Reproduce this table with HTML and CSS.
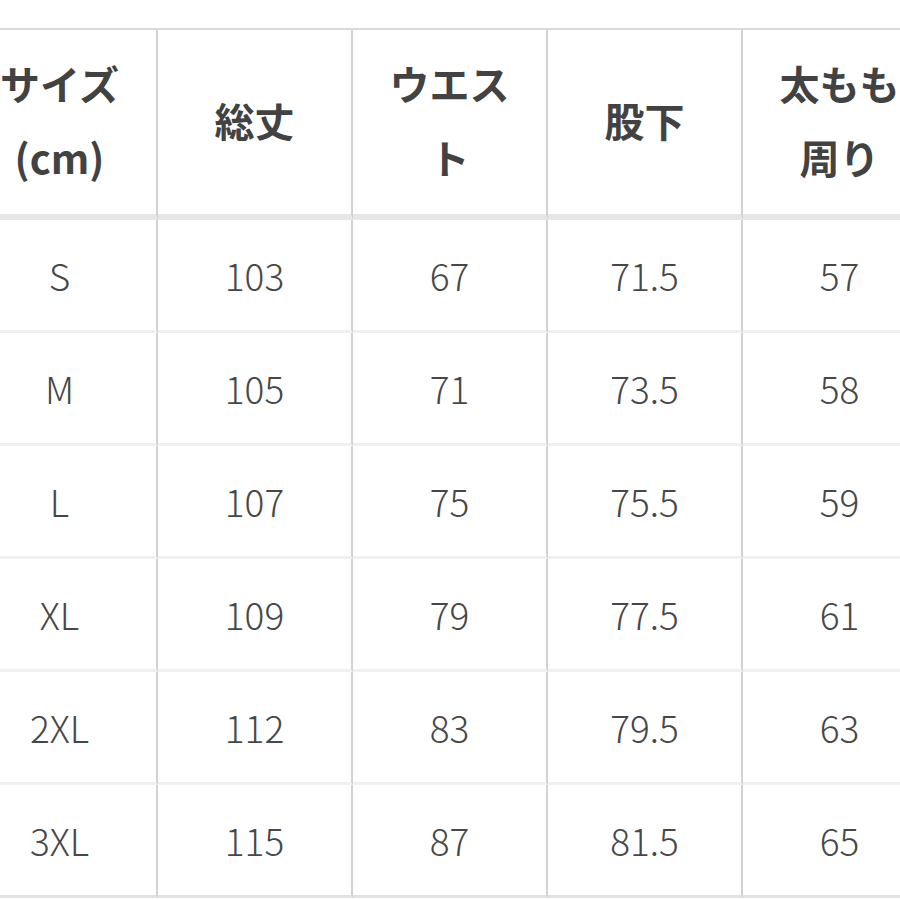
FILE: index.html
```html
<!DOCTYPE html>
<html lang="ja">
<head>
<meta charset="utf-8">
<link rel="stylesheet" href="styles.css">
</head>
<body>
<div class="frame">
  <div class="grid">
    <div class="cell head">サイズ<br>(cm)</div>
    <div class="cell head">総丈</div>
    <div class="cell head">ウエス<br>ト</div>
    <div class="cell head">股下</div>
    <div class="cell head">太もも<br>周り</div>

    <div class="cell">S</div><div class="cell">103</div><div class="cell">67</div><div class="cell">71.5</div><div class="cell">57</div>
    <div class="cell">M</div><div class="cell">105</div><div class="cell">71</div><div class="cell">73.5</div><div class="cell">58</div>
    <div class="cell">L</div><div class="cell">107</div><div class="cell">75</div><div class="cell">75.5</div><div class="cell">59</div>
    <div class="cell">XL</div><div class="cell">109</div><div class="cell">79</div><div class="cell">77.5</div><div class="cell">61</div>
    <div class="cell">2XL</div><div class="cell">112</div><div class="cell">83</div><div class="cell">79.5</div><div class="cell">63</div>
    <div class="cell last">3XL</div><div class="cell last">115</div><div class="cell last">87</div><div class="cell last">81.5</div><div class="cell last">65</div>
  </div>
</div>
</body>
</html>
```
FILE: styles.css
```css
html, body {
  margin: 0;
  padding: 0;
  background: #ffffff;
}
body {
  width: 900px;
  height: 900px;
  overflow: hidden;
  font-family: "Noto Sans CJK JP", "Noto Sans", sans-serif;
}
.frame {
  margin-top: 28px;
  width: 900px;
  overflow: hidden;
}
.grid {
  display: grid;
  grid-template-columns: repeat(5, 195px);
  margin-left: -37px;
  width: 975px;
  border-top: 2px solid #d9d9d9;
}
.cell {
  box-sizing: border-box;
  height: 113px;
  border-right: 2px solid #d2d2d2;
  border-bottom: 3px solid #f0f0f0;
  display: flex;
  align-items: center;
  justify-content: center;
  text-align: center;
  font-size: 37px;
  font-weight: 300;
  color: #474747;
}
.head {
  height: 190px;
  border-bottom: 6px solid #e6e6e6;
  font-size: 40px;
  font-weight: 700;
  line-height: 74px;
  color: #424242;
  padding-bottom: 4px;
}
.last {
  border-bottom: 3px solid #e2e2e2;
}
```
